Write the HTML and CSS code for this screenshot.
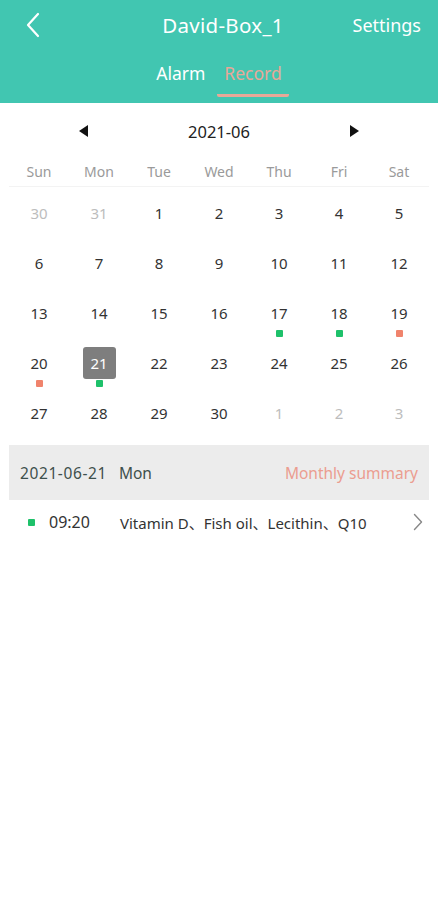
FILE: index.html
```html
<!DOCTYPE html>
<html lang="en">
<head>
    <meta charset="UTF-8">
    <meta name="viewport" content="width=device-width, initial-scale=1.0">
    <title>David-Box_1</title>
    <link rel="stylesheet" href="styles.css">
</head>
<body>
    <div class="header">
        <div class="top-bar">
            <svg class="back" width="16" height="26" viewBox="0 0 16 26">
                <path d="M13 2 L3 13 L13 24" fill="none" stroke="#ffffff" stroke-width="2.2" stroke-linecap="round" stroke-linejoin="round"/>
            </svg>
            <div class="title">David-Box_1</div>
            <div class="settings">Settings</div>
        </div>
        <div class="tabs">
            <div class="tab">Alarm</div>
            <div class="tab active">Record</div>
        </div>
    </div>

    <div class="calendar">
        <div class="month-nav">
            <svg width="10" height="12" viewBox="0 0 10 12"><path d="M9 0 L0 6 L9 12 Z" fill="#111"/></svg>
            <div class="month">2021-06</div>
            <svg width="10" height="12" viewBox="0 0 10 12"><path d="M1 0 L10 6 L1 12 Z" fill="#111"/></svg>
        </div>
        <div class="weekdays">
            <div>Sun</div><div>Mon</div><div>Tue</div><div>Wed</div><div>Thu</div><div>Fri</div><div>Sat</div>
        </div>
        <div class="days">
            <div class="day other"><span>30</span></div>
            <div class="day other"><span>31</span></div>
            <div class="day"><span>1</span></div>
            <div class="day"><span>2</span></div>
            <div class="day"><span>3</span></div>
            <div class="day"><span>4</span></div>
            <div class="day"><span>5</span></div>

            <div class="day"><span>6</span></div>
            <div class="day"><span>7</span></div>
            <div class="day"><span>8</span></div>
            <div class="day"><span>9</span></div>
            <div class="day"><span>10</span></div>
            <div class="day"><span>11</span></div>
            <div class="day"><span>12</span></div>

            <div class="day"><span>13</span></div>
            <div class="day"><span>14</span></div>
            <div class="day"><span>15</span></div>
            <div class="day"><span>16</span></div>
            <div class="day"><span>17</span><i class="dot green"></i></div>
            <div class="day"><span>18</span><i class="dot green"></i></div>
            <div class="day"><span>19</span><i class="dot red"></i></div>

            <div class="day"><span>20</span><i class="dot red"></i></div>
            <div class="day selected"><span>21</span><i class="dot green"></i></div>
            <div class="day"><span>22</span></div>
            <div class="day"><span>23</span></div>
            <div class="day"><span>24</span></div>
            <div class="day"><span>25</span></div>
            <div class="day"><span>26</span></div>

            <div class="day"><span>27</span></div>
            <div class="day"><span>28</span></div>
            <div class="day"><span>29</span></div>
            <div class="day"><span>30</span></div>
            <div class="day other"><span>1</span></div>
            <div class="day other"><span>2</span></div>
            <div class="day other"><span>3</span></div>
        </div>
    </div>

    <div class="summary">
        <div class="summary-date">2021-06-21<span class="weekday">Mon</span></div>
        <div class="summary-link">Monthly summary</div>
    </div>

    <div class="record">
        <i class="dot green"></i>
        <div class="time">09:20</div>
        <div class="items">Vitamin D、Fish oil、Lecithin、Q10</div>
        <svg class="chevron" width="10" height="18" viewBox="0 0 10 18">
            <path d="M1.5 1.5 L8.5 9 L1.5 16.5" fill="none" stroke="#888" stroke-width="1.4" stroke-linecap="round" stroke-linejoin="round"/>
        </svg>
    </div>
</body>
</html>
```

FILE: styles.css
```css
body {
    margin: 0;
    font-family: "Noto Sans", "Noto Sans CJK SC", sans-serif;
    background-color: #ffffff;
    color: #333;
}

.header {
    background-color: #41c6b1;
    color: #ffffff;
    height: 103px;
}

.top-bar {
    height: 50px;
    display: grid;
    grid-template-columns: 1fr auto 1fr;
    align-items: center;
    padding: 0 17px 0 25px;
}

.title {
    text-align: center;
    font-size: 20.5px;
    letter-spacing: 0.3px;
}

.settings {
    justify-self: end;
    font-size: 18px;
}

.tabs {
    display: flex;
    justify-content: center;
    gap: 12px;
    padding-left: 7px;
}

.tab {
    font-size: 17.5px;
    height: 47px;
    line-height: 46px;
    box-sizing: border-box;
}

.tab.active {
    color: #e8a898;
    border-bottom: 3px solid #e8a898;
    border-radius: 0 0 2px 2px;
    padding: 0 7px;
}

.calendar {
    padding: 8px 9px 0;
}

.month-nav {
    height: 40px;
    display: flex;
    align-items: center;
    justify-content: center;
}

.month {
    width: 260px;
    text-align: center;
    font-size: 16.5px;
    color: #222;
}

.weekdays {
    display: grid;
    grid-template-columns: repeat(7, 1fr);
    height: 30px;
    margin-top: 5px;
    align-items: center;
    text-align: center;
    font-size: 14px;
    color: #9a9a9a;
    border-bottom: 1px solid #f3f3f3;
}

.days {
    display: grid;
    grid-template-columns: repeat(7, 1fr);
    grid-auto-rows: 50px;
    padding-top: 1px;
}

.day {
    display: flex;
    flex-direction: column;
    align-items: center;
    padding-top: 9px;
}

.day span {
    width: 33px;
    height: 32px;
    line-height: 32px;
    text-align: center;
    font-size: 15px;
    border-radius: 3px;
}

.day.other span {
    color: #bdbdbd;
}

.day.selected span {
    background-color: #7e7e7e;
    color: #ffffff;
}

.dot {
    display: block;
    width: 7px;
    height: 7px;
    border-radius: 1px;
    margin-top: 1px;
}

.dot.green {
    background-color: #1ec16a;
}

.dot.red {
    background-color: #f0836c;
}

.summary {
    margin: 7px 9px 0;
    height: 55px;
    background-color: #ececec;
    display: flex;
    align-items: center;
    justify-content: space-between;
    padding: 0 11px;
    font-size: 15.5px;
}

.summary-date {
    color: #3e504d;
    letter-spacing: 0.6px;
}

.summary-date .weekday {
    margin-left: 12px;
    letter-spacing: 0;
}

.summary-link {
    color: #eb9d90;
}

.record {
    height: 44px;
    display: flex;
    align-items: center;
    padding: 0 15px 0 28px;
    font-size: 15px;
    color: #333;
}

.record .dot {
    margin: 0 14px 0 0;
}

.time {
    width: 71px;
    font-size: 16px;
}

.items {
    flex: 1;
}
```
